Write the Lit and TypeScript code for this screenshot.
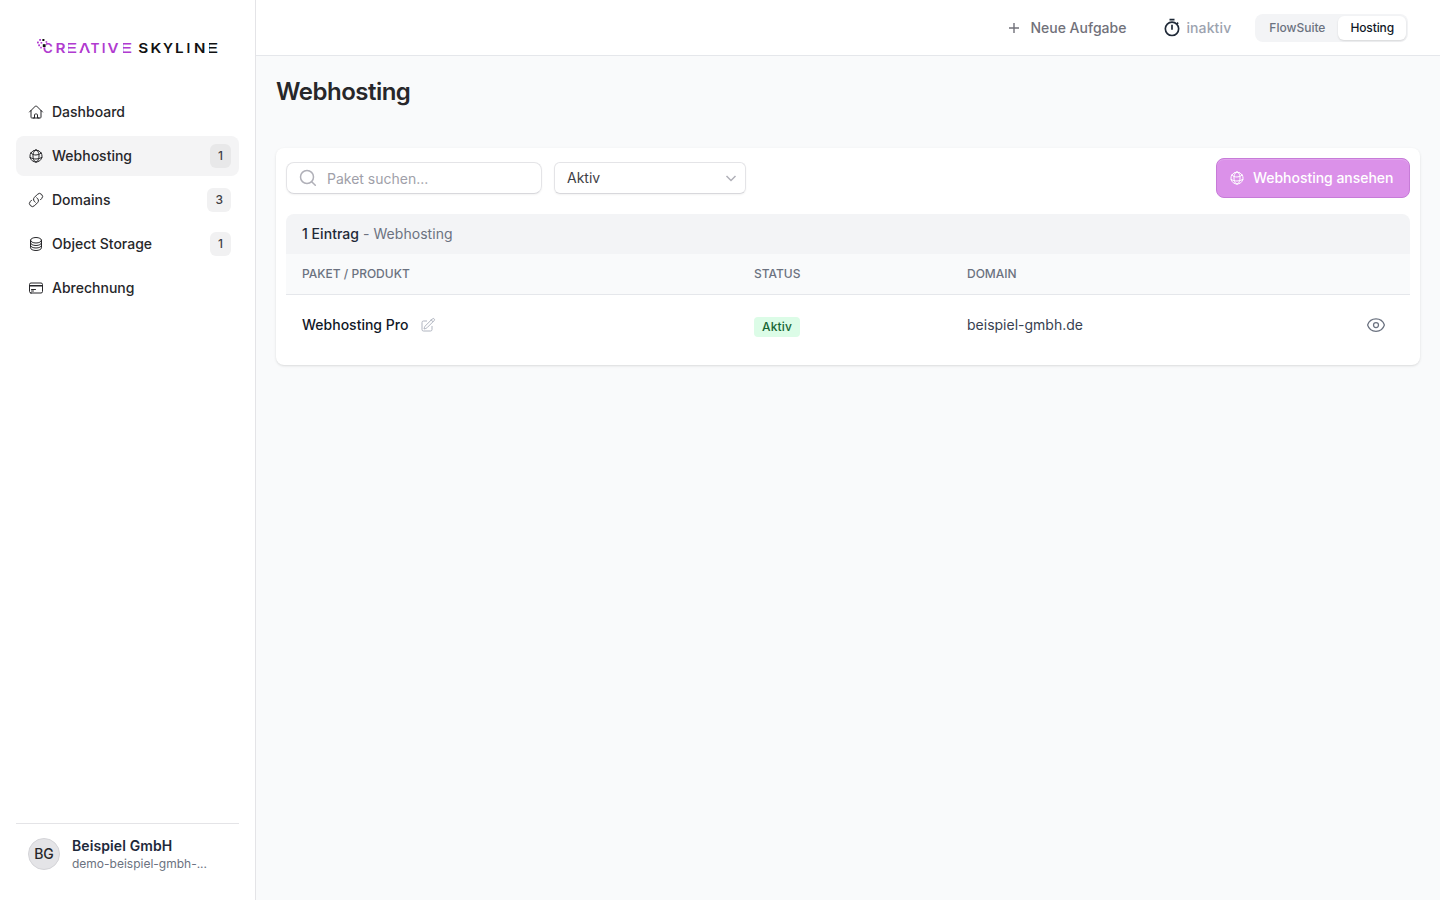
import { LitElement, html, css, svg } from "lit";
import { customElement } from "lit/decorators.js";

const ICONS: Record<string, string> = {
  home: "m2.25 12 8.954-8.955c.44-.439 1.152-.439 1.591 0L21.75 12M4.5 9.75v10.125c0 .621.504 1.125 1.125 1.125H9.75v-4.875c0-.621.504-1.125 1.125-1.125h2.25c.621 0 1.125.504 1.125 1.125V21h4.125c.621 0 1.125-.504 1.125-1.125V9.75M8.25 21h8.25",
  globe: "M12 21a9.004 9.004 0 0 0 8.716-6.747M12 21a9.004 9.004 0 0 1-8.716-6.747M12 21c2.485 0 4.5-4.03 4.5-9S14.485 3 12 3m0 18c-2.485 0-4.5-4.03-4.5-9S9.515 3 12 3m0 0a8.997 8.997 0 0 1 7.843 4.582M12 3a8.997 8.997 0 0 0-7.843 4.582m15.686 0A11.953 11.953 0 0 1 12 10.5c-2.998 0-5.74-1.1-7.843-2.918m15.686 0A8.959 8.959 0 0 1 21 12c0 .778-.099 1.533-.284 2.253m0 0A17.919 17.919 0 0 1 12 16.5c-3.162 0-6.133-.815-8.716-2.247m0 0A9.015 9.015 0 0 1 3 12c0-1.605.42-3.113 1.157-4.418",
  link: "M13.19 8.688a4.5 4.5 0 0 1 1.242 7.244l-4.5 4.5a4.5 4.5 0 0 1-6.364-6.364l1.757-1.757m13.35-.622 1.757-1.757a4.5 4.5 0 0 0-6.364-6.364l-4.5 4.5a4.5 4.5 0 0 0 1.242 7.244",
  stack: "M20.25 6.375c0 2.278-3.694 4.125-8.25 4.125S3.75 8.653 3.75 6.375m16.5 0c0-2.278-3.694-4.125-8.25-4.125S3.75 4.097 3.75 6.375m16.5 0v11.25c0 2.278-3.694 4.125-8.25 4.125s-8.25-1.847-8.25-4.125V6.375m16.5 0v3.75m-16.5-3.75v3.75m16.5 0v3.75C20.25 16.153 16.556 18 12 18s-8.25-1.847-8.25-4.125v-3.75m16.5 0c0 2.278-3.694 4.125-8.25 4.125s-8.25-1.847-8.25-4.125",
  card: "M2.25 8.25h19.5M2.25 9h19.5m-16.5 5.25h6m-6 2.25h3m-3.75 3h15a2.25 2.25 0 0 0 2.25-2.25V6.75A2.25 2.25 0 0 0 19.5 4.5h-15a2.25 2.25 0 0 0-2.25 2.25v10.5A2.25 2.25 0 0 0 4.5 19.5Z",
  edit: "m16.862 4.487 1.687-1.688a1.875 1.875 0 1 1 2.652 2.652L10.582 16.07a4.5 4.5 0 0 1-1.897 1.13L6 18l.8-2.685a4.5 4.5 0 0 1 1.13-1.897l8.932-8.931Zm0 0L19.5 7.125M18 14v4.75A2.25 2.25 0 0 1 15.75 21H5.25A2.25 2.25 0 0 1 3 18.75V8.25A2.25 2.25 0 0 1 5.25 6H10",
  eye: "M2.036 12.322a1.012 1.012 0 0 1 0-.639C3.423 7.51 7.36 4.5 12 4.5c4.638 0 8.573 3.007 9.963 7.178.07.207.07.431 0 .639C20.577 16.49 16.64 19.5 12 19.5c-4.638 0-8.573-3.007-9.963-7.178ZM15 12a3 3 0 1 1-6 0 3 3 0 0 1 6 0Z",
};

const icon = (name: string, cls = "") => html`
  <svg class="icon ${cls}" viewBox="0 0 24 24" fill="none" stroke="currentColor" stroke-width="1.5"
    stroke-linecap="round" stroke-linejoin="round" aria-hidden="true"><path d=${ICONS[name]}></path></svg>`;

const NAV = [
  { icon: "home", label: "Dashboard" },
  { icon: "globe", label: "Webhosting", count: 1, active: true },
  { icon: "link", label: "Domains", count: 3 },
  { icon: "stack", label: "Object Storage", count: 1 },
  { icon: "card", label: "Abrechnung" },
];

const PIXELS: [number, number, number, string][] = [
  [3.2, 3, 1.8, "#b13bd0"], [6.4, 3, 2, "#111"], [1, 5.6, 1.8, "#b13bd0"], [4.6, 6, 1.6, "#b13bd0"],
  [9.6, 5.2, 1.6, "#b13bd0"], [2.2, 8.4, 1.8, "#b13bd0"], [6.8, 8.2, 2.8, "#111"], [4.2, 10.8, 1.6, "#b13bd0"],
];

@customElement("app-root")
export class AppRoot extends LitElement {
  static styles = css`
    :host { display: block; height: 100vh; font-family: Inter, sans-serif; font-size: 14px; line-height: 20px; color: #27272a; }
    * { box-sizing: border-box; }
    .shell { display: grid; grid-template-columns: 256px 1fr; height: 100%; }
    .icon { display: block; width: 16px; height: 16px; flex: none; }
    aside { display: flex; flex-direction: column; padding: 16px; background: #fff; border-right: 1px solid #e4e4e7; }
    .logo { display: block; width: 183px; height: 20px; margin: 20px 0 36px 20px; }
    .logo text { font-family: Inter, sans-serif; font-weight: 600; font-size: 13.4px; }
    nav { display: flex; flex-direction: column; gap: 4px; }
    .item { display: flex; align-items: center; gap: 8px; height: 40px; padding: 0 8px 0 12px; border-radius: 8px; font-weight: 500; }
    .item.active { background: #f4f4f5; }
    .grow { flex: 1; }
    .count { display: block; padding: 2px 8px; height: 24px; border-radius: 6px; background: #f1f1f2; font-size: 12px; color: #3f3f46; }
    .active .count { background: #e8e8e9; }
    .profile { display: flex; align-items: center; gap: 12px; margin-top: auto; padding: 12px; height: 61px; border-top: 1px solid #e4e4e7; }
    .avatar { display: grid; place-items: center; width: 32px; height: 32px; border-radius: 50%; background: #e4e4e7; border: 1px solid #d4d4d8; font-weight: 500; }
    .name { font-weight: 600; line-height: 20px; letter-spacing: .1px; color: #1e293b; }
    .mail { font-size: 12px; line-height: 16px; color: #6b7280; }
    .page { display: flex; flex-direction: column; background: #f9fafb; }
    header { display: flex; align-items: center; justify-content: flex-end; height: 56px; padding-right: 32px; background: #fff; border-bottom: 1px solid #e5e7eb; }
    .new { display: flex; align-items: center; gap: 8px; margin-right: 36px; font-weight: 500; color: #71717a; }
    .timer { display: flex; align-items: center; gap: 4px; margin-right: 24px; font-weight: 500; letter-spacing: .12px; color: #9ca3af; }
    .timer svg { width: 20px; height: 20px; color: #1f2937; }
    .switch { display: flex; padding: 2px; height: 28px; border-radius: 8px; background: #f3f4f6; font-size: 12px; font-weight: 500; line-height: 24px; color: #6b7280; }
    .switch span { padding: 0 12px; border-radius: 6px; }
    .switch .on { letter-spacing: -.12px; background: #fff; color: #111827; box-shadow: 0 1px 2px rgba(0,0,0,.12); }
    .switch span:first-child { padding-right: 13px; }
    main { padding: 20px; }
    h1 { margin: 0 0 40px; font-size: 24px; line-height: 32px; font-weight: 600; letter-spacing: -.5px; }
    .card { height: 217px; padding: 10px; border-radius: 8px; background: #fff; box-shadow: 0 1px 3px rgba(0,0,0,.1), 0 1px 2px -1px rgba(0,0,0,.1); }
    .tools { display: flex; align-items: center; gap: 12px; height: 40px; margin-bottom: 16px; }
    .field { display: flex; align-items: center; height: 32px; border: 1px solid #e4e4e7; border-bottom-color: #d8d8dc; border-radius: 8px; box-shadow: 0 1px 2px rgba(0,0,0,.05); }
    .search { width: 256px; padding: 2px 11px 0; gap: 9px; color: #9f9fa9; }
    .search .icon { width: 20px; height: 20px; margin-top: -2px; color: #b0b0b8; }
    .select { width: 192px; padding: 0 8px 0 12px; border-radius: 6px; justify-content: space-between; color: #3f3f46; }
    .select svg { width: 12px; height: 12px; color: #b0b0b8; }
    .cta { display: flex; align-items: center; gap: 8px; width: 194px; height: 40px; margin-left: auto; padding: 0 0 0 12px; border-radius: 8px; background: #db91e9; border: 1px solid #c77bd8; box-shadow: inset 0 1px #e1a5ed; color: #fff; font-weight: 500; letter-spacing: -.03px; white-space: nowrap; }
    .summary { height: 40px; padding: 10px 16px; border-radius: 8px 8px 0 0; background: #f3f4f6; color: #6b7280; letter-spacing: .04px; }
    .summary b { font-weight: 500; color: #1f2937; }
    .row { display: grid; grid-template-columns: 452px 213px 1fr auto; align-items: center; padding: 0 24px 0 16px; }
    .head { height: 41px; background: #f9fafb; border-bottom: 1px solid #e5e7eb; font-size: 12px; font-weight: 500; color: #6b7280; }
    .body { height: 60px; color: #374151; }
    .product { display: flex; align-items: center; gap: 12px; font-weight: 500; color: #111827; }
    .product .icon { color: #b0b5c0; }
    .badge { display: inline-block; margin-top: 4px; height: 20px; padding: 0 8px; border-radius: 4px; background: #dcfce7; color: #166534; font-size: 12px; font-weight: 500; letter-spacing: .15px; }
    .body .eye { width: 20px; height: 20px; color: #6b7280; }
  `;

  private logo() {
    const letter = (c: string, x: number, w: number) =>
      svg`<text x=${x} y="16.6" textLength=${w} lengthAdjust="spacingAndGlyphs">${c}</text>`;
    // The wordmark's E has no stem and its A has no crossbar.
    const openE = (x: number) => svg`${letter("E", x - 4.6, 14)}<rect x=${x - 4.4} y="5" width="4.4" height="13" fill="#fff"></rect>`;
    const openA = (x: number) => svg`${letter("A", x, 11.4)}<path d="M${x + 5.7} 9.4l3 7.6h-6z" fill="#fff"></path>`;
    return html`<svg class="logo" viewBox="0 0 183 20" role="img" aria-label="Creative Skyline">
      <g fill="#b13bd0">
        ${openE(32)}${letter("C", 6.8, 10)}${letter("R", 19.6, 10)}${openA(43)}
        ${openE(87)}${letter("T", 54.5, 9)}${letter("I", 65.8, 3.8)}${letter("V", 71.5, 11)}
      </g>
      <g fill="#111">
        ${openE(173)}${letter("S", 102.3, 10)}${letter("K", 114.6, 10.8)}${letter("Y", 127, 10)}${letter("L", 139, 8.6)}
        ${letter("I", 150.5, 3.8)}${letter("N", 158, 11.4)}
      </g>
      <rect x="5.5" y="5.5" width="4.6" height="5.8" fill="#fff"></rect>
      ${PIXELS.map(([x, y, s, c]) => svg`<rect x=${x} y=${y} width=${s} height=${s} fill=${c}></rect>`)}
    </svg>`;
  }

  render() {
    return html`<div class="shell">
      <aside>
        ${this.logo()}
        <nav>
          ${NAV.map((n) => html`<div class="item ${n.active ? "active" : ""}">
            ${icon(n.icon)}<span class="grow">${n.label}</span>
            ${n.count ? html`<span class="count">${n.count}</span>` : ""}
          </div>`)}
        </nav>
        <div class="profile">
          <span class="avatar">BG</span>
          <div><div class="name">Beispiel GmbH</div><div class="mail">demo-beispiel-gmbh-...</div></div>
        </div>
      </aside>
      <div class="page">
        <header>
          <div class="new">
            <svg class="icon" viewBox="0 0 16 16" fill="none" stroke="currentColor" stroke-width="1.4"><path d="M8 3v10M3 8h10"></path></svg>
            <span>Neue Aufgabe</span>
          </div>
          <div class="timer">
            <svg viewBox="0 0 24 24" fill="none" stroke="currentColor" stroke-width="2"><path d="M9 2h6M12 8v6M17.8 7.2l1.6-1.6"></path><circle cx="12" cy="13" r="8"></circle></svg>
            <span>inaktiv</span>
          </div>
          <div class="switch"><span>FlowSuite</span><span class="on">Hosting</span></div>
        </header>
        <main>
          <h1>Webhosting</h1>
          <section class="card">
            <div class="tools">
              <div class="field search">
                <svg class="icon" viewBox="0 0 20 20" fill="none" stroke="currentColor" stroke-width="1.5" stroke-linecap="round"><circle cx="9" cy="9" r="6.5"></circle><path d="m13.7 13.7 3.6 3.6"></path></svg>
                <span>Paket suchen...</span>
              </div>
              <div class="field select"><span>Aktiv</span>
                <svg viewBox="0 0 12 12" fill="none" stroke="currentColor" stroke-width="1.5"><path d="m1.5 4 4.5 4.5L10.5 4"></path></svg>
              </div>
              <div class="cta">${icon("globe")}<span>Webhosting ansehen</span></div>
            </div>
            <div class="summary"><b>1 Eintrag</b> - Webhosting</div>
            <div class="row head"><span>PAKET / PRODUKT</span><span>STATUS</span><span>DOMAIN</span></div>
            <div class="row body">
              <div class="product"><span>Webhosting Pro</span>${icon("edit")}</div>
              <div><span class="badge">Aktiv</span></div>
              <span>beispiel-gmbh.de</span>
              ${icon("eye", "eye")}
            </div>
          </section>
        </main>
      </div>
    </div>`;
  }
}
